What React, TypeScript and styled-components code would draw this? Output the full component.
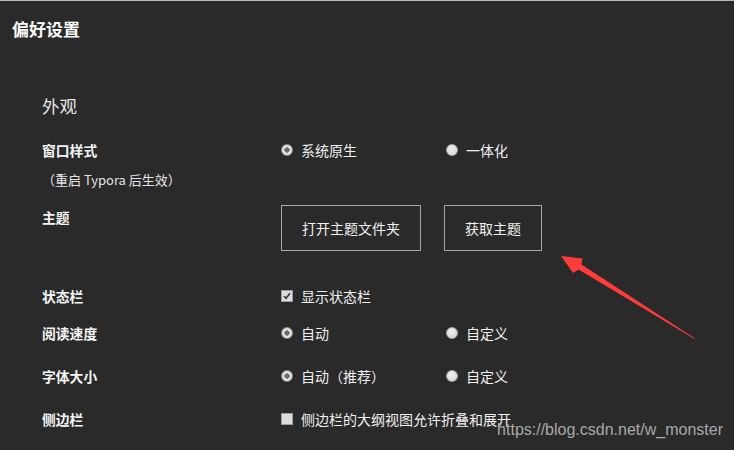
import React from "react";
import styled, { createGlobalStyle } from "styled-components";

const Global = createGlobalStyle`
  html, body { margin: 0; padding: 0; background: #2a2a2a; }
  body { font-family: "Noto Sans CJK SC", "Microsoft YaHei", sans-serif; }
`;

const Page = styled.div`
  position: relative;
  width: 734px;
  height: 450px;
  box-sizing: border-box;
  overflow: hidden;
  background: #2a2a2a;
  border-top: 1px solid #b8b8b8;
  padding: 16px 0 0 12px;
  color: #f2f2f2;
`;

const Title = styled.h1`
  margin: 0;
  font-size: 17px;
  line-height: 24px;
  font-weight: 700;
  color: #fafafa;
`;

const Section = styled.section`
  padding-left: 30px;
  margin-top: 53px;
`;

const SectionTitle = styled.h2`
  margin: 0 0 22px;
  font-size: 17.5px;
  line-height: 24px;
  font-weight: 400;
  color: #e6e6e6;
`;

const Row = styled.div<{ $mt: number }>`
  display: grid;
  grid-template-columns: 239px auto;
  margin-top: ${(p) => p.$mt}px;
`;

const LabelCol = styled.div<{ $pt?: number }>`
  display: flex;
  flex-direction: column;
  padding-top: ${(p) => p.$pt ?? 0}px;
`;

const Label = styled.div`
  font-size: 13.8px;
  line-height: 20px;
  font-weight: 700;
  color: #f4f4f4;
`;

const Note = styled.div`
  margin-top: 10px;
  font-size: 13px;
  line-height: 20px;
  color: #e4e4e4;
`;

const Options = styled.div`
  display: grid;
  grid-template-columns: 165px auto;
  align-items: start;
  white-space: nowrap;
`;

const Option = styled.label`
  display: flex;
  align-items: center;
  gap: 8px;
  height: 20px;
  font-size: 14px;
  color: #f0f0f0;
  white-space: nowrap;
`;

const Radio = styled.span<{ $on?: boolean }>`
  box-sizing: border-box;
  width: 12px;
  height: 12px;
  border-radius: 50%;
  border: 1px solid ${(p) => (p.$on ? "#8c8c8c" : "#a8a8a8")};
  background: ${(p) =>
    p.$on
      ? "radial-gradient(circle, #6e6e6e 0 2.4px, #e2e2e2 2.9px)"
      : "radial-gradient(circle at 40% 35%, #f0f0f0, #d2d2d2)"};
  flex: none;
`;

const Check = styled.span`
  box-sizing: border-box;
  width: 12px;
  height: 12px;
  border: 1px solid #9c9c9c;
  background: #dcdcdc;
  display: flex;
  align-items: center;
  justify-content: center;
  flex: none;
`;

const Buttons = styled.div`
  display: flex;
  gap: 23px;
`;

const Button = styled.button`
  box-sizing: border-box;
  height: 46px;
  padding: 0 20px;
  background: transparent;
  border: 1px solid #a8a8a8;
  color: #f0f0f0;
  font-family: inherit;
  font-size: 14px;
  line-height: 20px;
`;

const Watermark = styled.div`
  position: absolute;
  right: 11px;
  top: 419px;
  font-family: "Liberation Sans", Arial, sans-serif;
  font-size: 16px;
  line-height: 20px;
  color: #a9a9a9;
`;

const ArrowSvg = styled.svg`
  position: absolute;
  left: 0;
  top: 0;
  pointer-events: none;
`;

const RadioOpt = ({ on, children }: { on?: boolean; children: React.ReactNode }) => (
  <Option>
    <Radio $on={on} />
    {children}
  </Option>
);

const CheckOpt = ({ checked, children }: { checked?: boolean; children: React.ReactNode }) => (
  <Option>
    <Check>
      {checked && (
        <svg width="8" height="8" viewBox="0 0 8 8">
          <path d="M1 4.2 L3 6.2 L7 1.2" stroke="#333" strokeWidth="1.6" fill="none" />
        </svg>
      )}
    </Check>
    {children}
  </Option>
);

export default function App() {
  return (
    <>
      <Global />
      <Page>
        <Title>偏好设置</Title>
        <Section>
          <SectionTitle>外观</SectionTitle>
          <Row $mt={0}>
            <LabelCol>
              <Label>窗口样式</Label>
              <Note>（重启 Typora 后生效）</Note>
            </LabelCol>
            <Options>
              <RadioOpt on>系统原生</RadioOpt>
              <RadioOpt>一体化</RadioOpt>
            </Options>
          </Row>
          <Row $mt={15}>
            <LabelCol $pt={2}>
              <Label>主题</Label>
            </LabelCol>
            <Buttons>
              <Button>打开主题文件夹</Button>
              <Button>获取主题</Button>
            </Buttons>
          </Row>
          <Row $mt={35}>
            <LabelCol>
              <Label>状态栏</Label>
            </LabelCol>
            <Options>
              <CheckOpt checked>显示状态栏</CheckOpt>
            </Options>
          </Row>
          <Row $mt={17}>
            <LabelCol>
              <Label>阅读速度</Label>
            </LabelCol>
            <Options>
              <RadioOpt on>自动</RadioOpt>
              <RadioOpt>自定义</RadioOpt>
            </Options>
          </Row>
          <Row $mt={23}>
            <LabelCol>
              <Label>字体大小</Label>
            </LabelCol>
            <Options>
              <RadioOpt on>自动（推荐）</RadioOpt>
              <RadioOpt>自定义</RadioOpt>
            </Options>
          </Row>
          <Row $mt={23}>
            <LabelCol>
              <Label>侧边栏</Label>
            </LabelCol>
            <Options>
              <CheckOpt>侧边栏的大纲视图允许折叠和展开</CheckOpt>
            </Options>
          </Row>
        </Section>
        <ArrowSvg width="734" height="450" viewBox="0 0 734 450">
          <polygon
            points="695,337.5 581.5,263.5 582.5,257.5 561,255 573,272 578.5,268.5 694.5,338"
            fill="#ff3b3b"
          />
        </ArrowSvg>
        <Watermark>https://blog.csdn.net/w_monster</Watermark>
      </Page>
    </>
  );
}
